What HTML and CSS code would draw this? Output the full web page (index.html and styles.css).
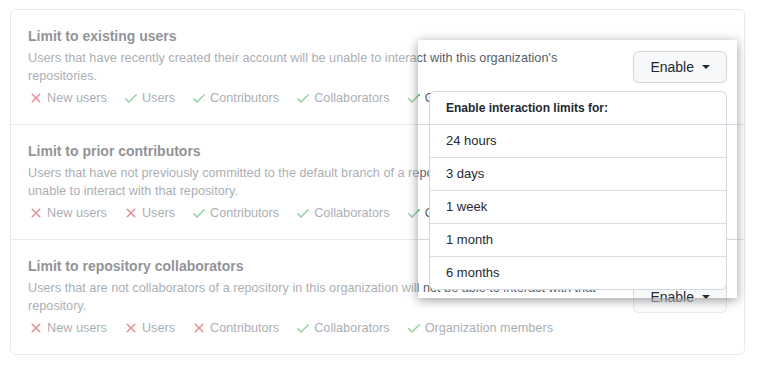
FILE: index.html
```html
<!DOCTYPE html>
<html>
<head>
    <meta charset="UTF-8">
    <title>Interaction limits</title>
    <link rel="stylesheet" href="styles.css">
</head>
<body>
    <div class="frame">
        <!-- the page, dimmed -->
        <div class="page dimmed">
            <div class="limits">
                <div class="limit">
                    <div class="limit-text">
                        <h3>Limit to existing users</h3>
                        <p class="note">Users that have recently created their account will be unable to interact with this organization's repositories.</p>
                        <ul class="legend">
                            <li class="no">New users</li>
                            <li class="yes">Users</li>
                            <li class="yes">Contributors</li>
                            <li class="yes">Collaborators</li>
                            <li class="yes">Organization members</li>
                        </ul>
                    </div>
                    <div class="details"><button class="btn" type="button">Enable <span class="caret"></span></button></div>
                </div>
                <div class="limit">
                    <div class="limit-text">
                        <h3>Limit to prior contributors</h3>
                        <p class="note">Users that have not previously committed to the default branch of a repository in this organization will be unable to interact with that repository.</p>
                        <ul class="legend">
                            <li class="no">New users</li>
                            <li class="no">Users</li>
                            <li class="yes">Contributors</li>
                            <li class="yes">Collaborators</li>
                            <li class="yes">Organization members</li>
                        </ul>
                    </div>
                    <div class="details"><button class="btn" type="button">Enable <span class="caret"></span></button></div>
                </div>
                <div class="limit">
                    <div class="limit-text">
                        <h3>Limit to repository collaborators</h3>
                        <p class="note">Users that are not collaborators of a repository in this organization will not be able to interact with that repository.</p>
                        <ul class="legend">
                            <li class="no">New users</li>
                            <li class="no">Users</li>
                            <li class="no">Contributors</li>
                            <li class="yes">Collaborators</li>
                            <li class="yes">Organization members</li>
                        </ul>
                    </div>
                    <div class="details"><button class="btn" type="button">Enable <span class="caret"></span></button></div>
                </div>
            </div>
        </div>

        <!-- highlighted crop with the open menu -->
        <div class="spot">
            <div class="page copy">
                <div class="limits">
                    <div class="limit">
                        <div class="limit-text">
                            <h3>Limit to existing users</h3>
                            <p class="note">Users that have recently created their account will be unable to interact with this organization's repositories.</p>
                            <ul class="legend">
                                <li class="no">New users</li>
                                <li class="yes">Users</li>
                                <li class="yes">Contributors</li>
                                <li class="yes">Collaborators</li>
                                <li class="yes">Organization members</li>
                            </ul>
                        </div>
                        <div class="details">
                            <button class="btn" type="button">Enable <span class="caret"></span></button>
                            <div class="menu">
                                <div class="menu-header">Enable interaction limits for:</div>
                                <div class="menu-item">24 hours</div>
                                <div class="menu-item">3 days</div>
                                <div class="menu-item">1 week</div>
                                <div class="menu-item">1 month</div>
                                <div class="menu-item">6 months</div>
                            </div>
                        </div>
                    </div>
                    <div class="limit">
                        <div class="limit-text">
                            <h3>Limit to prior contributors</h3>
                            <p class="note">Users that have not previously committed to the default branch of a repository in this organization will be unable to interact with that repository.</p>
                            <ul class="legend">
                                <li class="no">New users</li>
                                <li class="no">Users</li>
                                <li class="yes">Contributors</li>
                                <li class="yes">Collaborators</li>
                                <li class="yes">Organization members</li>
                            </ul>
                        </div>
                        <div class="details"><button class="btn" type="button">Enable <span class="caret"></span></button></div>
                    </div>
                    <div class="limit">
                        <div class="limit-text">
                            <h3>Limit to repository collaborators</h3>
                            <p class="note">Users that are not collaborators of a repository in this organization will not be able to interact with that repository.</p>
                            <ul class="legend">
                                <li class="no">New users</li>
                                <li class="no">Users</li>
                                <li class="no">Contributors</li>
                                <li class="yes">Collaborators</li>
                                <li class="yes">Organization members</li>
                            </ul>
                        </div>
                        <div class="details"><button class="btn" type="button">Enable <span class="caret"></span></button></div>
                    </div>
                </div>
            </div>
        </div>
    </div>
</body>
</html>
```
FILE: styles.css
```css
*{
    box-sizing: border-box;
}
body{
    margin: 0;
    background: #fff;
    font-family: "Liberation Sans", Arial, sans-serif;
    color: #24292f;
}
.frame{
    position: relative;
    width: 757px;
    height: 366px;
    overflow: hidden;
}
.page{
    width: 757px;
    padding: 9px 12px 0 10px;
}
.dimmed{
    opacity: 0.5;
}
.limits{
    border: 1px solid #d0d7de;
    border-radius: 6px;
}
.limit{
    display: flex;
    align-items: center;
    padding: 16px 17px 17px 17px;
}
.limit + .limit{
    border-top: 1px solid #d0d7de;
}
.limit-text{
    flex: 1;
}
h3{
    margin: 0;
    font-size: 14px;
    line-height: 21px;
    font-weight: bold;
}
.note{
    margin: 2px 0 0 0;
    max-width: 590px;
    font-size: 12.7px;
    line-height: 18px;
    color: #57606a;
}
.legend{
    display: flex;
    gap: 16px;
    margin: 4px 0 0 0;
    padding: 0;
    list-style: none;
    font-size: 12.7px;
    line-height: 18px;
    color: #57606a;
}
.legend li{
    display: flex;
    align-items: center;
    gap: 3px;
}
.legend li::before{
    content: "";
    width: 16px;
    height: 16px;
    background-repeat: no-repeat;
    background-position: center;
}
.legend .no::before{
    background-image: url("data:image/svg+xml,%3Csvg xmlns='http://www.w3.org/2000/svg' viewBox='0 0 16 16'%3E%3Cpath fill='%23cf222e' d='M3.72 3.72a.75.75 0 0 1 1.06 0L8 6.94l3.22-3.22a.749.749 0 0 1 1.275.326.749.749 0 0 1-.215.734L9.06 8l3.22 3.22a.749.749 0 0 1-.326 1.275.749.749 0 0 1-.734-.215L8 9.06l-3.22 3.22a.751.751 0 0 1-1.042-.018.751.751 0 0 1-.018-1.042L6.940 8 3.72 4.78a.75.75 0 0 1 0-1.06Z'/%3E%3C/svg%3E");
}
.legend .yes::before{
    background-image: url("data:image/svg+xml,%3Csvg xmlns='http://www.w3.org/2000/svg' viewBox='0 0 16 16'%3E%3Cpath fill='%232da44e' d='M13.78 4.22a.75.75 0 0 1 0 1.06l-7.25 7.25a.75.75 0 0 1-1.06 0L2.22 9.28a.751.751 0 0 1 .018-1.042.751.751 0 0 1 1.042-.018L6 10.94l6.72-6.72a.75.75 0 0 1 1.06 0Z'/%3E%3C/svg%3E");
}
.details{
    position: relative;
}
.btn{
    display: flex;
    align-items: center;
    gap: 8px;
    height: 32px;
    padding: 0 16px;
    border: 1px solid rgba(27, 31, 36, 0.15);
    border-radius: 6px;
    background: #f6f8fa;
    font-family: inherit;
    font-size: 14px;
    font-weight: 500;
    color: #24292f;
}
.caret{
    width: 0;
    height: 0;
    border-top: 4px solid #24292f;
    border-left: 4px solid transparent;
    border-right: 4px solid transparent;
}
/* crop of the page shown at full strength */
.spot{
    position: absolute;
    left: 418px;
    top: 40px;
    width: 319px;
    height: 258px;
    overflow: hidden;
    background: #fff;
    box-shadow: 0 2px 10px rgba(0, 0, 0, 0.4);
    z-index: 2;
}
.copy{
    position: absolute;
    left: -418px;
    top: -40px;
}
.menu{
    position: absolute;
    top: 40px;
    right: 0;
    width: 298px;
    background: #fff;
    border: 1px solid #d0d7de;
    border-radius: 6px;
    z-index: 3;
}
.menu-header{
    padding: 8px 16px;
    font-size: 12px;
    line-height: 16px;
    font-weight: bold;
    border-bottom: 1px solid #d8dee4;
}
.menu-item{
    padding: 8px 16px;
    font-size: 13px;
    line-height: 16px;
    color: #24292f;
}
.menu-item + .menu-item{
    border-top: 1px solid #d8dee4;
}
```
